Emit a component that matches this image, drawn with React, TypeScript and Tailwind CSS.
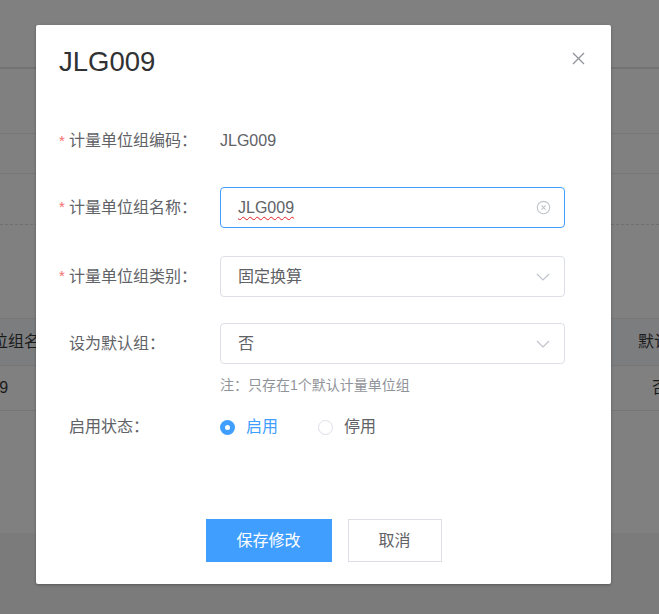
import React from 'react'

const FONT = { fontFamily: '"Liberation Sans", "Noto Sans CJK SC", sans-serif' }

function CloseIcon() {
  return (
    <svg width="13" height="13" viewBox="0 0 13 13" fill="none" stroke="#909399" strokeWidth={1.3}>
      <path d="M1 1l11 11M12 1L1 12" />
    </svg>
  )
}

function ClearIcon() {
  return (
    <svg width="15" height="15" viewBox="0 0 16 16" fill="none" stroke="#c0c4cc" strokeWidth={1.2}>
      <circle cx="8" cy="8" r="6.6" />
      <path d="M5.8 5.8l4.4 4.4M10.2 5.8l-4.4 4.4" />
    </svg>
  )
}

function Chevron() {
  return (
    <svg width="14" height="8" viewBox="0 0 14 8" fill="none" stroke="#c0c4cc" strokeWidth={1.2}>
      <path d="M1 1l6 6 6-6" />
    </svg>
  )
}

function Label({ text, required }: { text: string; required?: boolean }) {
  return (
    <div className="w-[161px] shrink-0 flex items-center text-[16px] text-[#606266]">
      <span className="w-[10px] text-[#f56c6c] text-[15px]">{required ? '*' : ''}</span>
      <span>{text}：</span>
    </div>
  )
}

function Background() {
  return (
    <div className="flex flex-col w-full h-full bg-[#808080] text-[16px] text-[#1b1b1c]">
      <div className="h-[67px] shrink-0" />
      <div className="h-[2px] bg-[#737373] shrink-0" />
      <div className="h-[64px] shrink-0" />
      <div className="h-px bg-[#777777] shrink-0" />
      <div className="h-[39px] shrink-0" />
      <div className="h-px bg-[#777777] shrink-0" />
      <div className="h-[50px] shrink-0" />
      <div className="border-t border-dashed border-[#6f6f6f] shrink-0" />
      <div className="h-[93px] shrink-0" />
      <div className="h-[47px] shrink-0 bg-[#7c7d7e] border-t border-[#777777] flex items-center justify-between">
        <span className="-ml-[24px]">单位组名称</span>
        <span className="mr-[-27px]">默认组</span>
      </div>
      <div className="h-[45px] shrink-0 border-t border-[#767676] flex items-center justify-between">
        <span className="-ml-[48px]">JLG009</span>
        <span className="mr-[-9px]">否</span>
      </div>
      <div className="h-px bg-[#767676] shrink-0" />
      <div className="h-[122px] shrink-0" />
      <div className="flex-1 bg-[#7a7b7a]" />
    </div>
  )
}

export default function App() {
  return (
    <div className="relative w-[659px] h-[614px] overflow-hidden" style={FONT}>
      <Background />

      {/* Dialog */}
      <div className="absolute left-[36px] top-[25px] w-[575px] h-[559px] bg-white rounded-[2px] shadow-[0_1px_3px_rgba(0,0,0,0.3)] flex flex-col">
        <div className="flex items-start justify-between pl-[23px] pr-[26px] pt-[18px]">
          <h1 className="text-[27.5px] leading-[37px] text-[#303133]">JLG009</h1>
          <div className="pt-[9px]">
            <CloseIcon />
          </div>
        </div>

        <div className="flex flex-col pl-[23px] pr-[46px]">
          {/* code */}
          <div className="flex items-center h-[40px] mt-[41px]">
            <Label text="计量单位组编码" required />
            <span className="text-[16px] text-[#606266]">JLG009</span>
          </div>

          {/* name */}
          <div className="flex items-center h-[41px] mt-[26px]">
            <Label text="计量单位组名称" required />
            <div className="flex-1 h-full flex items-center justify-between border border-[#409eff] rounded-[4px] pl-[17px] pr-[13px]">
              <span className="text-[16px] text-[#606266] underline decoration-wavy decoration-[#e02020] decoration-[1px] underline-offset-[3px]">
                JLG009
              </span>
              <ClearIcon />
            </div>
          </div>

          {/* type */}
          <div className="flex items-center h-[41px] mt-[28px]">
            <Label text="计量单位组类别" required />
            <div className="flex-1 h-full flex items-center justify-between border border-[#dcdfe6] rounded-[4px] pl-[17px] pr-[14px]">
              <span className="text-[16px] text-[#606266]">固定换算</span>
              <Chevron />
            </div>
          </div>

          {/* default */}
          <div className="flex items-center h-[41px] mt-[26px]">
            <Label text="设为默认组" />
            <div className="flex-1 h-full flex items-center justify-between border border-[#dcdfe6] rounded-[4px] pl-[17px] pr-[14px]">
              <span className="text-[16px] text-[#606266]">否</span>
              <Chevron />
            </div>
          </div>
          <div className="pl-[161px] mt-[11px] text-[14px] leading-[20px] text-[#909399]">
            注：只存在1个默认计量单位组
          </div>

          {/* status */}
          <div className="flex items-center h-[40px] mt-[12px]">
            <Label text="启用状态" />
            <div className="flex items-center text-[16px]">
              <span className="w-[15px] h-[15px] rounded-full bg-[#409eff] flex items-center justify-center">
                <span className="w-[5px] h-[5px] rounded-full bg-white" />
              </span>
              <span className="ml-[11px] text-[#409eff]">启用</span>
              <span className="ml-[40px] w-[15px] h-[15px] rounded-full border border-[#dcdfe6] bg-white" />
              <span className="ml-[11px] text-[#606266]">停用</span>
            </div>
          </div>
        </div>

        <div className="mt-auto pb-[22px] flex justify-center gap-[16px]">
          <button className="w-[126px] h-[43px] bg-[#409eff] text-white text-[16px]">保存修改</button>
          <button className="w-[94px] h-[43px] border border-[#dcdfe6] bg-white text-[#606266] text-[16px]">取消</button>
        </div>
      </div>
    </div>
  )
}
